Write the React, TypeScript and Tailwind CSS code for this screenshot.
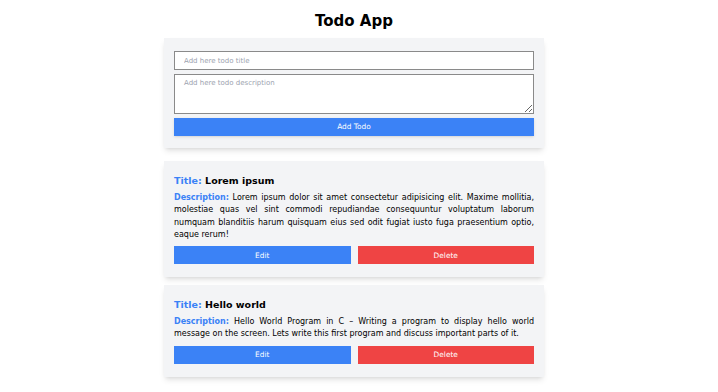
import { useState } from "react";

type Todo = {
  id: number;
  title: string;
  description: string;
};

const initialTodos: Todo[] = [
  {
    id: 1,
    title: "Lorem ipsum",
    description:
      "Lorem ipsum dolor sit amet consectetur adipisicing elit. Maxime mollitia, molestiae quas vel sint commodi repudiandae consequuntur voluptatum laborum numquam blanditiis harum quisquam eius sed odit fugiat iusto fuga praesentium optio, eaque rerum!",
  },
  {
    id: 2,
    title: "Hello world",
    description:
      "Hello World Program in C – Writing a program to display hello world message on the screen. Lets write this first program and discuss important parts of it.",
  },
];

export default function App() {
  const [todos, setTodos] = useState<Todo[]>(initialTodos);
  const [title, setTitle] = useState("");
  const [description, setDescription] = useState("");

  const addTodo = () => {
    if (!title.trim()) return;
    setTodos([...todos, { id: Date.now(), title, description }]);
    setTitle("");
    setDescription("");
  };

  const deleteTodo = (id: number) => {
    setTodos(todos.filter((todo) => todo.id !== id));
  };

  const editTodo = (todo: Todo) => {
    setTitle(todo.title);
    setDescription(todo.description);
    deleteTodo(todo.id);
  };

  return (
    <div className="min-h-screen w-[708px] bg-white font-['DejaVu_Sans',sans-serif] text-black">
      <div className="mx-auto w-[380px] pb-4">
        <h1 className="pt-[10px] text-center text-[15px] font-bold leading-[22px]">Todo App</h1>

        {/* Form */}
        <div className="mt-[6px] flex flex-col gap-[4px] bg-[#f3f4f6] px-[10px] pt-[13px] pb-[12px] shadow-md">
          <input
            type="text"
            value={title}
            onChange={(event) => setTitle(event.target.value)}
            placeholder="Add here todo title"
            className="h-[19px] border border-[#8a8a8a] bg-white px-[9px] text-[7px] outline-none placeholder:text-[#9ca3af]"
          />
          <textarea
            value={description}
            onChange={(event) => setDescription(event.target.value)}
            placeholder="Add here todo description"
            className="h-[40px] border border-[#8a8a8a] bg-white px-[9px] py-[3px] text-[7px] outline-none placeholder:text-[#9ca3af]"
          />
          <button
            type="button"
            onClick={addTodo}
            className="h-[18px] bg-[#3b82f6] text-[7.4px] font-medium text-white shadow-sm"
          >
            Add Todo
          </button>
        </div>

        {/* Todo list */}
        <div className="mt-[13px] flex flex-col gap-[8px]">
          {todos.map((todo) => (
            <div key={todo.id} className="bg-[#f3f4f6] px-[10px] pt-[13px] pb-[13px] shadow-md">
              <h2 className="text-[9.5px] font-bold leading-[14px]">
                <span className="text-[#3b82f6]">Title:</span> {todo.title}
              </h2>
              <p className="mt-[4px] text-justify text-[8px] leading-[12.3px]">
                <span className="font-bold text-[#3b82f6]">Description:</span> {todo.description}
              </p>
              <div className="mt-[5px] flex gap-[7px]">
                <button
                  type="button"
                  onClick={() => editTodo(todo)}
                  className="h-[18px] flex-1 bg-[#3b82f6] text-[7.4px] font-medium text-white"
                >
                  Edit
                </button>
                <button
                  type="button"
                  onClick={() => deleteTodo(todo.id)}
                  className="h-[18px] flex-1 bg-[#ef4444] text-[7.4px] font-medium text-white"
                >
                  Delete
                </button>
              </div>
            </div>
          ))}
        </div>
      </div>
    </div>
  );
}
